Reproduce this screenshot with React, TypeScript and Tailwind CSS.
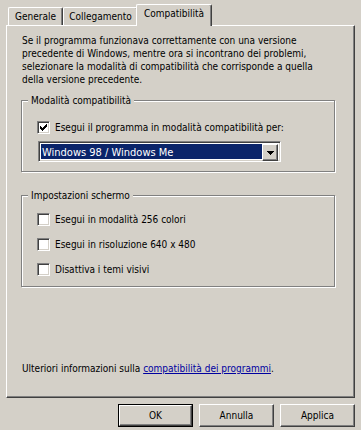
import React from "react";

const raised =
  "border border-t-white border-l-white border-r-[#404040] border-b-[#404040] shadow-[inset_-1px_-1px_0_#808080]";
const sunken =
  "border border-t-[#808080] border-l-[#808080] border-r-white border-b-white shadow-[inset_1px_1px_0_#404040,inset_-1px_-1px_0_#d4d0c8]";

function Check() {
  const starts = [2, 3, 4, 3, 2, 1, 0];
  return (
    <svg width="7" height="7" viewBox="0 0 7 7" shapeRendering="crispEdges">
      {starts.map((s, i) => (
        <rect key={i} x={i} y={s} width="1" height="3" fill="#000" />
      ))}
    </svg>
  );
}

function Checkbox({ checked, label }: { checked?: boolean; label: string }) {
  return (
    <div className="flex items-center h-[13px]">
      <div className={`w-[13px] h-[13px] box-border bg-white flex items-center justify-center ${sunken}`}>
        {checked ? <Check /> : null}
      </div>
      <span className="ml-[5px] leading-[13px] whitespace-nowrap">{label}</span>
    </div>
  );
}

function Group({
  title,
  className,
  children,
}: {
  title: string;
  className: string;
  children: React.ReactNode;
}) {
  return (
    <div
      className={`relative w-[314px] box-border border border-[#808080] shadow-[1px_1px_0_white,inset_1px_1px_0_white] ${className}`}
    >
      <span className="absolute -top-[7px] left-[6px] px-[3px] bg-[#d4d0c8] leading-[13px] whitespace-nowrap">
        {title}
      </span>
      {children}
    </div>
  );
}

function Button({ label, def }: { label: string; def?: boolean }) {
  if (def) {
    return (
      <div className="w-[75px] h-[23px] box-border border border-black">
        <div className={`w-full h-full box-border flex items-center justify-center ${raised}`}>
          {label}
        </div>
      </div>
    );
  }
  return (
    <div className={`w-[75px] h-[23px] box-border flex items-center justify-center ${raised}`}>
      {label}
    </div>
  );
}

const tab =
  "box-border border-t border-l border-r border-t-white border-l-white border-r-[#404040] shadow-[inset_-1px_0_0_#808080] rounded-t-[2px] flex justify-center leading-[13px] whitespace-nowrap";

export default function App() {
  return (
    <div className="w-[361px] h-[430px] bg-[#d4d0c8] text-black text-[10px] font-['DejaVu_Sans_Condensed','DejaVu_Sans',sans-serif] font-stretch-condensed flex flex-col overflow-hidden">
      {/* Tabs */}
      <div className="h-[25px] flex items-end pl-[8px] relative z-10">
        <div className={`w-[55px] h-[18px] items-center ${tab}`}>Generale</div>
        <div className={`w-[75px] h-[18px] items-center ${tab}`}>Collegamento</div>
        <div className={`-ml-[2px] -mb-[1px] w-[76px] h-[22px] bg-[#d4d0c8] items-start pt-[2px] ${tab}`}>
          Compatibilità
        </div>
      </div>

      {/* Panel */}
      <div className="ml-[6px] w-[349px] h-[373px] box-border border border-t-white border-l-white border-r-[#404040] border-b-[#404040] shadow-[inset_-1px_-1px_0_#808080] flex flex-col pl-[14px] pt-[8px]">
        <div className="pl-[1px] leading-[13px] whitespace-nowrap">
          <div>Se il programma funzionava correttamente con una versione</div>
          <div>precedente di Windows, mentre ora si incontrano dei problemi,</div>
          <div>selezionare la modalità di compatibilità che corrisponde a quella</div>
          <div>della versione precedente.</div>
        </div>

        <Group title="Modalità compatibilità" className="mt-[14px] h-[72px] pl-[15px] pt-[20px]">
          <Checkbox checked label="Esegui il programma in modalità compatibilità per:" />
          <div className={`mt-[7px] ml-[1px] w-[243px] h-[21px] box-border p-[2px] bg-white flex ${sunken}`}>
            <div className="flex-1 bg-[#0a246a] text-white text-[11px] leading-[17px] pl-[1px] whitespace-nowrap">
              Windows 98 / Windows Me
            </div>
            <div className={`w-[16px] h-[17px] box-border bg-[#d4d0c8] flex items-center justify-center ${raised}`}>
              <svg width="7" height="4" viewBox="0 0 7 4" shapeRendering="crispEdges">
                <rect x="0" y="0" width="7" height="1" fill="#000" />
                <rect x="1" y="1" width="5" height="1" fill="#000" />
                <rect x="2" y="2" width="3" height="1" fill="#000" />
                <rect x="3" y="3" width="1" height="1" fill="#000" />
              </svg>
            </div>
          </div>
        </Group>

        <Group title="Impostazioni schermo" className="mt-[23px] h-[92px] pl-[15px] pt-[17px] flex flex-col gap-[12px]">
          <Checkbox label="Esegui in modalità 256 colori" />
          <Checkbox label="Esegui in risoluzione 640 x 480" />
          <Checkbox label="Disattiva i temi visivi" />
        </Group>

        <div className="mt-[75px] pl-[1px] leading-[13px] whitespace-nowrap">
          Ulteriori informazioni sulla{" "}
          <span className="text-[#0000a0] underline">compatibilità dei programmi</span>.
        </div>
      </div>

      {/* Buttons */}
      <div className="mt-[6px] flex justify-end gap-[6px] pr-[6px]">
        <Button label="OK" def />
        <Button label="Annulla" />
        <Button label="Applica" />
      </div>
    </div>
  );
}
